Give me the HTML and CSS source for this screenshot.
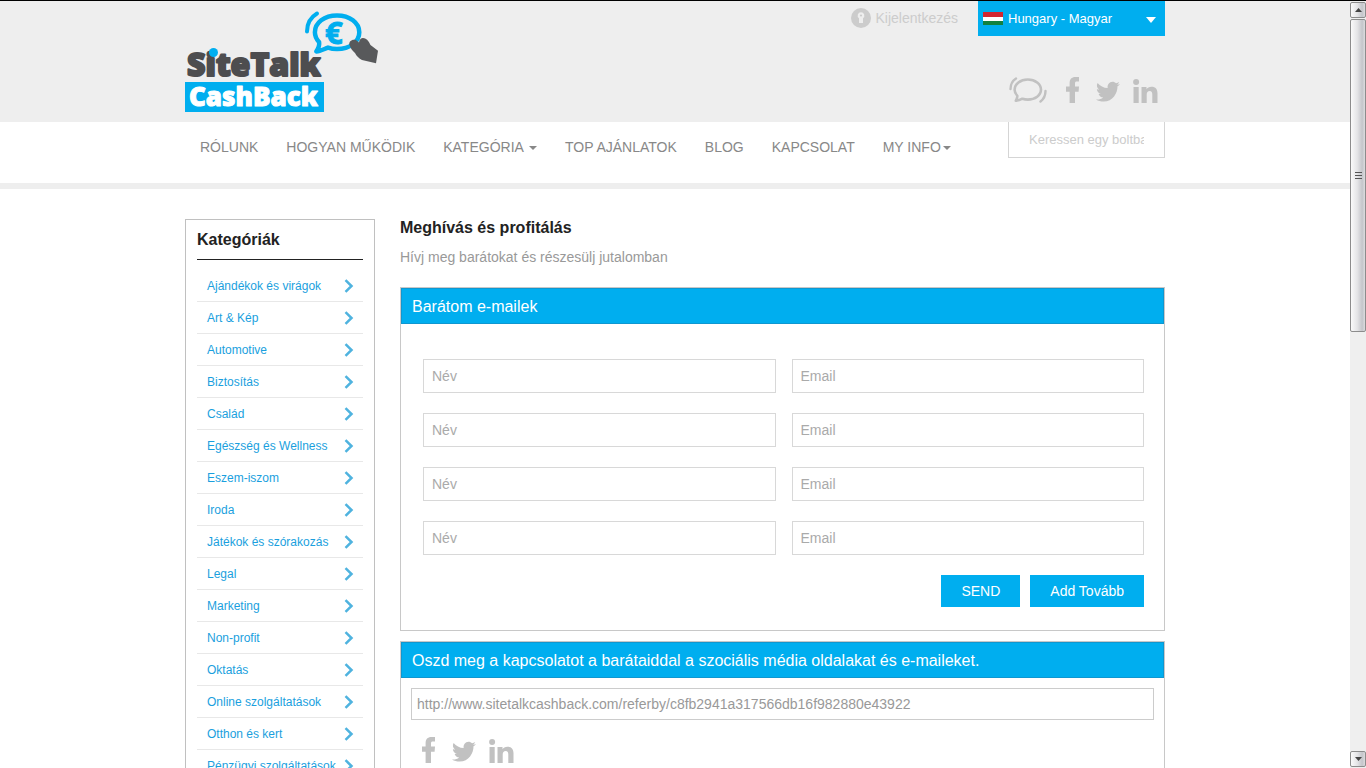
FILE: index.html
```html
<!DOCTYPE html>
<html lang="hu">
<head>
<meta charset="utf-8">
<title>SiteTalk CashBack</title>
<link rel="stylesheet" href="styles.css">
</head>
<body>
<svg class="defs" aria-hidden="true">
  <symbol id="i-fb" viewBox="0 0 14 26"><path d="M3.600 26V14.800H0V9.600h3.600V6.200C3.600 2.200 5.600 0 9.400 0H13v4.600h-2.200c-1.300 0-1.800.6-1.800 1.800v3.200h4l-.4 5.200H9V26z"/></symbol>
  <symbol id="i-tw" viewBox="0 0 24 22"><path d="M24 2.900c-.9 1.100-1.700 1.800-2.500 2.300.2 6.800-4.700 15.400-13.900 15.400-2.800 0-5.400-.8-7.600-2.200 2.600.3 5.200-.4 7.200-2-2.200 0-4-1.500-4.600-3.400.8.1 1.500.1 2.200-.1C2.500 12.400.9 10.300.9 8c.7.400 1.400.6 2.200.6C.9 7 .2 4.200 1.600 2c2.400 3 6 4.900 10.100 5.100C11 3.900 13.300.700 16.500.700c1.400 0 2.700.6 3.600 1.500 1.100-.2 2.200-.6 3.100-1.200-.4 1.200-1.100 2.100-2.100 2.700 1 0 2-.4 2.900-.8z"/></symbol>
  <symbol id="i-in" viewBox="0 0 25 24"><circle cx="3.100" cy="3" r="3"/><path d="M.5 8h5.200v16H.5zM8.500 8h5v2.200c.9-1.500 2.600-2.500 4.900-2.500 4.300 0 6.100 2.500 6.100 6.800V24h-5.200v-8.600c0-2.200-.7-3.500-2.600-3.500-2 0-3 1.400-3 3.500V24H8.500z"/></symbol>
  <symbol id="i-chat" viewBox="0 0 38 26"><g fill="none" stroke="currentColor" stroke-width="2.600" stroke-linejoin="round" stroke-linecap="round"><path d="M6.800 23.700c1.300-2 1.700-3.700 1.400-5.100C6.500 16.900 5.600 15 5.600 12.800 5.600 7 11.400 2.500 18.800 2.500S32 7 32 12.600s-5.800 10-13.200 10c-2 0-3.800-.3-5.400-.9-2 1.200-4.200 1.900-6.600 2z"/><path d="M1.500 12C1.500 7.500 3.200 4 7 1.500M36.500 14c0 4.500-1.700 8-5 10.500" stroke-width="2.400"/></g></symbol>
  <symbol id="i-chev" viewBox="0 0 10 14"><path d="M1.500 1.200 7.500 7l-6 5.800" fill="none" stroke="#4fb3df" stroke-width="2.500"/></symbol>
</svg>

<div class="page">
  <header class="top">
    <div class="wrap top-row">
      <a class="logo" href="#" aria-label="SiteTalk CashBack">
        <svg width="194" height="103" viewBox="0 0 194 103">
          <g fill="none" stroke="#00aeef" stroke-linejoin="round" stroke-linecap="round">
            <path d="M122 22.500C122 14 125.200 8.500 132 4.500" stroke-width="4"/>
            <path d="M131.300 42.500c2.200-3.200 3.200-7.200 2.800-9.400-2.600-2.700-4.200-6-4.200-9.800 0-9.500 9.400-16.900 22.100-16.900s22.300 7.400 22.300 16.900-9.500 16.700-22.300 16.700c-3.400 0-6.300-.5-9-1.400-3.500 1.200-7.600 3.700-11.700 3.900z" stroke-width="4.500"/>
          </g>
          <text class="euro" x="140" y="35">€</text>
          <path d="M164.500 36c-1-3.500 2.500-6.300 6.500-5l3 2.500c.3-3 2-4.500 4-4.500 3 0 5.500 2.500 7.500 7l7.500 5.700-2 12.600-14-3.300c-3-1.500-5.500-4-7-7-2.500-2-4.500-5-5.500-8z" fill="#58595b"/>
          <text class="site" x="2" y="67">SiteTalk</text>
          <circle cx="28.500" cy="43.500" r="4.500" fill="#00aeef"/>
          <path d="M0 73h139v30H0z" fill="#00aeef"/>
          <text class="cash" x="4" y="97">CashBack</text>
        </svg>
      </a>
      <div class="tools">
        <div class="account">
          <a class="logout" href="#">
            <svg width="20" height="20" viewBox="0 0 20 20"><circle cx="10" cy="10" r="10" fill="#ccc"/><path d="M10 4.200a3.400 3.400 0 0 1 2 6.100V15H8v-4.700a3.400 3.400 0 0 1 2-6.100z" fill="#eee"/><circle cx="10" cy="7.500" r="1.100" fill="#ccc"/></svg>
            Kijelentkezés</a>
          <div class="lang">
            <svg class="flag" width="20" height="13" viewBox="0 0 20 13"><path fill="#d22630" d="M0 0h20v5H0z"/><path fill="#fff" d="M0 5h20v4H0z"/><path fill="#12813f" d="M0 9h20v4H0z"/></svg>
            <select aria-label="Nyelv"><option>Hungary - Magyar</option></select>
            <svg class="drop" width="10" height="6" viewBox="0 0 10 6"><path fill="#fff" d="M0 0h10L5 6z"/></svg>
          </div>
        </div>
        <div class="social">
          <a href="#" aria-label="SiteTalk"><svg width="38" height="26"><use href="#i-chat"/></svg></a>
          <a class="s-fb" href="#" aria-label="Facebook"><svg width="14" height="26"><use href="#i-fb"/></svg></a>
          <a class="s-tw" href="#" aria-label="Twitter"><svg width="24" height="22"><use href="#i-tw"/></svg></a>
          <a class="s-in" href="#" aria-label="LinkedIn"><svg width="25" height="24"><use href="#i-in"/></svg></a>
        </div>
      </div>
    </div>
  </header>

  <div class="bar">
    <div class="wrap bar-row">
      <nav class="menu">
        <a href="#">RÓLUNK</a>
        <a href="#">HOGYAN MŰKÖDIK</a>
        <a href="#">KATEGÓRIA <span class="caret"></span></a>
        <a href="#">TOP AJÁNLATOK</a>
        <a href="#">BLOG</a>
        <a href="#">KAPCSOLAT</a>
        <a href="#">MY INFO<span class="caret"></span></a>
      </nav>
      <input class="search" type="text" placeholder="Keressen egy boltban" aria-label="Keresés">
    </div>
  </div>

  <div class="wrap content">
    <aside class="side">
      <h2>Kategóriák</h2>
      <ul>
        <li><a href="#">Ajándékok és virágok<svg><use href="#i-chev"/></svg></a></li>
        <li><a href="#">Art &amp; Kép<svg><use href="#i-chev"/></svg></a></li>
        <li><a href="#">Automotive<svg><use href="#i-chev"/></svg></a></li>
        <li><a href="#">Biztosítás<svg><use href="#i-chev"/></svg></a></li>
        <li><a href="#">Család<svg><use href="#i-chev"/></svg></a></li>
        <li><a href="#">Egészség és Wellness<svg><use href="#i-chev"/></svg></a></li>
        <li><a href="#">Eszem-iszom<svg><use href="#i-chev"/></svg></a></li>
        <li><a href="#">Iroda<svg><use href="#i-chev"/></svg></a></li>
        <li><a href="#">Játékok és szórakozás<svg><use href="#i-chev"/></svg></a></li>
        <li><a href="#">Legal<svg><use href="#i-chev"/></svg></a></li>
        <li><a href="#">Marketing<svg><use href="#i-chev"/></svg></a></li>
        <li><a href="#">Non-profit<svg><use href="#i-chev"/></svg></a></li>
        <li><a href="#">Oktatás<svg><use href="#i-chev"/></svg></a></li>
        <li><a href="#">Online szolgáltatások<svg><use href="#i-chev"/></svg></a></li>
        <li><a href="#">Otthon és kert<svg><use href="#i-chev"/></svg></a></li>
        <li><a href="#">Pénzügyi szolgáltatások<svg><use href="#i-chev"/></svg></a></li>
      </ul>
    </aside>

    <main class="main">
      <h1>Meghívás és profitálás</h1>
      <p class="lead">Hívj meg barátokat és részesülj jutalomban</p>

      <section class="panel">
        <h3>Barátom e-mailek</h3>
        <form class="invite">
          <div class="fields">
            <input type="text" placeholder="Név" aria-label="Név 1"><input type="email" placeholder="Email" aria-label="Email 1">
            <input type="text" placeholder="Név" aria-label="Név 2"><input type="email" placeholder="Email" aria-label="Email 2">
            <input type="text" placeholder="Név" aria-label="Név 3"><input type="email" placeholder="Email" aria-label="Email 3">
            <input type="text" placeholder="Név" aria-label="Név 4"><input type="email" placeholder="Email" aria-label="Email 4">
          </div>
          <div class="actions">
            <button type="button">SEND</button>
            <button type="button">Add Tovább</button>
          </div>
        </form>
      </section>

      <section class="panel">
        <h3>Oszd meg a kapcsolatot a barátaiddal a szociális média oldalakat és e-maileket.</h3>
        <div class="share">
          <input type="text" aria-label="Link" value="http://www.sitetalkcashback.com/referby/c8fb2941a317566db16f982880e43922">
          <div class="social">
            <a href="#" aria-label="Facebook"><svg width="14" height="26"><use href="#i-fb"/></svg></a>
            <a class="s-tw" href="#" aria-label="Twitter"><svg width="24" height="22"><use href="#i-tw"/></svg></a>
            <a class="s-in" href="#" aria-label="LinkedIn"><svg width="25" height="24"><use href="#i-in"/></svg></a>
          </div>
        </div>
      </section>
    </main>
  </div>
</div>

<div class="scroll" aria-hidden="true">
  <div class="sbtn"><svg width="7" height="4" viewBox="0 0 7 4"><path d="M0 4h7L3.500 0z" fill="#444"/></svg></div>
  <div class="thumb"><svg width="7" height="8" viewBox="0 0 7 8"><path d="M0 .5h7M0 3.500h7M0 6.500h7" stroke="#555"/></svg></div>
  <div class="track"></div>
  <div class="sbtn"><svg width="7" height="4" viewBox="0 0 7 4"><path d="M0 0h7L3.500 4z" fill="#444"/></svg></div>
</div>
</body>
</html>
```
FILE: styles.css
```css
* { box-sizing: border-box; }
body {
  margin: 0;
  height: 100vh;
  overflow: hidden;
  display: flex;
  border-top: 1px solid #000;
  background: #fff;
  color: #999;
  font: 14px/20px "Liberation Sans", Arial, sans-serif;
}
a { color: inherit; text-decoration: none; }
input, button, select { font: inherit; border-radius: 0; margin: 0; }
input::placeholder { color: #aaa; opacity: 1; }
svg { display: block; flex: none; }
.defs { position: absolute; width: 0; height: 0; }
.page { flex: 1; min-width: 0; overflow: hidden; }
.wrap { max-width: 980px; margin: 0 auto; }

.top { background: #eee; }
.top-row { display: flex; justify-content: space-between; height: 121px; }
.logo { padding-top: 8px; }
.site, .cash {
  font-family: "Open Sans", sans-serif;
  font-weight: 800;
  stroke-linejoin: round;
  stroke-width: 2px;
}
.site { font-size: 32px; fill: #4d4d4f; stroke: #4d4d4f; }
.cash { font-size: 26px; fill: #fff; stroke: #fff; stroke-width: 1px; }
.euro { font: bold 31px "Open Sans", sans-serif; fill: #00aeef; stroke: #00aeef; stroke-width: 1px; }
.tools { display: flex; flex-direction: column; align-items: flex-end; }
.account { display: flex; gap: 20px; }
.logout { display: flex; gap: 5px; height: 34px; align-items: center; color: #ccc; }
.lang { position: relative; width: 187px; }
.lang select {
  appearance: none;
  display: block;
  width: 100%;
  height: 35px;
  padding: 0 30px;
  border: 0;
  background: #00aeef;
  color: #fff;
  font-size: 13px;
}
.flag { position: absolute; left: 5px; top: 11px; }
.drop { position: absolute; right: 9px; top: 16px; }
.social { display: flex; align-items: flex-end; color: #c1c1c1; fill: #c1c1c1; }
.top .social { margin: 41px 7px 0 0; }
.s-fb { margin-left: 19px; }
.s-tw { margin-left: 16px; }
.s-in { margin-left: 13px; }

.bar { border-bottom: 6px solid #eee; }
.bar-row { display: flex; justify-content: space-between; height: 61px; }
.menu { display: flex; gap: 28px; padding: 15px; color: #888; white-space: nowrap; }
.caret {
  display: inline-block;
  margin-left: 2px;
  vertical-align: middle;
  border: 4px solid transparent;
  border-top-color: #888;
  border-bottom: 0;
}
.search {
  width: 157px;
  height: 36px;
  padding: 0 20px;
  border: 1px solid #d5d5d5;
  border-top: 0;
  font-size: 13px;
}
.search::placeholder { color: #ccc; }

.content { display: flex; gap: 25px; align-items: flex-start; padding-top: 30px; }
.side { width: 190px; border: 1px solid #c0c0c0; padding: 0 11px; }
.side h2 {
  margin: 0;
  padding: 10px 0 9px;
  border-bottom: 1px solid #222;
  color: #222;
  font-size: 16px;
}
.side ul { margin: 10px 0 0; padding: 0; list-style: none; }
.side li { border-bottom: 1px solid #e8e8e8; }
.side li a {
  display: flex;
  align-items: center;
  justify-content: space-between;
  height: 31px;
  padding: 0 9px 0 10px;
  color: #1a9fde;
  font-size: 12px;
  white-space: nowrap;
}
.side li svg { width: 10px; height: 14px; }

.main { flex: 1; min-width: 0; }
h1 { margin: 0; padding: 0 0 10px; line-height: 18px; font-size: 16px; color: #222; }
.lead { margin: 0 0 20px; }
.panel { border: 1px solid #c8c8c8; margin-bottom: 10px; }
.panel h3 {
  margin: 0;
  padding: 8px 10px 6px;
  border: 1px solid #0f97d0;
  background: #00aeef;
  color: #fff;
  font-size: 16px;
  font-weight: normal;
}
.invite { padding: 35px 20px 23px 22px; }
.fields { display: grid; grid-template-columns: 1fr 1fr; gap: 20px 16px; }
.fields input {
  min-width: 0;
  height: 34px;
  padding: 0 8px;
  border: 1px solid #d8d8d8;
}
.actions { display: flex; justify-content: flex-end; gap: 10px; margin-top: 20px; }
.actions button { height: 32px; padding: 0 20px; border: 0; background: #00aeef; color: #fff; }
.share { padding: 10px; }
.share input {
  width: 100%;
  height: 32px;
  padding: 0 5px;
  border: 1px solid #ccc;
  color: #999;
}
.share .social { margin: 17px 11px; }

.scroll { width: 16px; display: flex; flex-direction: column; background: #efefef; padding: 1px 0; }
.sbtn, .thumb {
  display: flex;
  align-items: center;
  justify-content: center;
  border: 1px solid #8c8c8c;
  border-radius: 2px;
  background: linear-gradient(90deg, #fafafa, #e4e4e6 45%, #c4c5ca 80%, #dcdcde);
}
.sbtn { height: 16px; }
.thumb { height: 313px; margin-top: 1px; }
.track { flex: 1; }
```
